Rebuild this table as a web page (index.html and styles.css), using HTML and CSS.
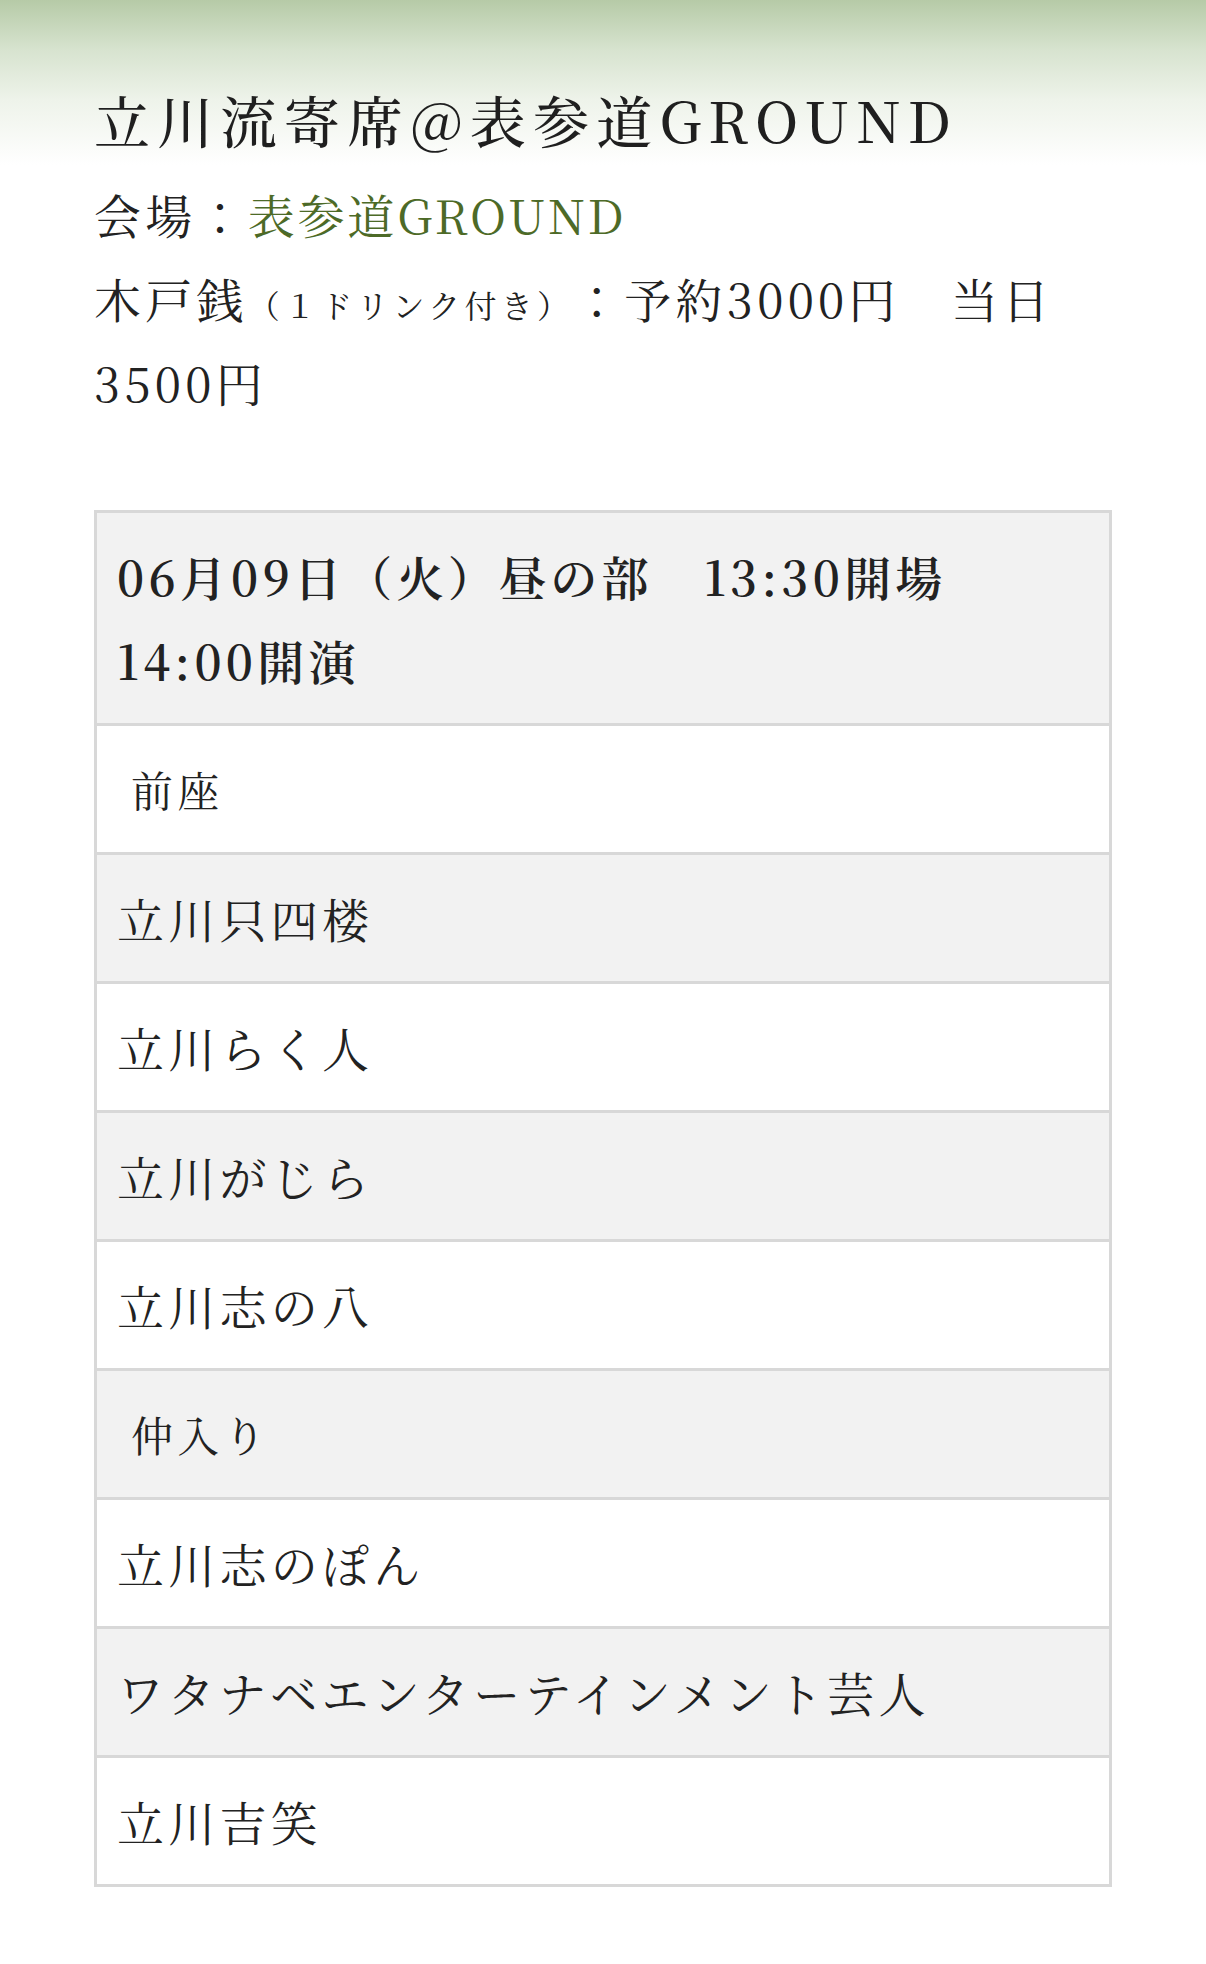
FILE: index.html
```html
<!DOCTYPE html>
<html lang="ja">
<head>
<meta charset="utf-8">
<title>立川流寄席@表参道GROUND</title>
<link rel="stylesheet" href="styles.css">
</head>
<body>
<main class="page">
  <h1 class="event-title">立川流寄席@表参道GROUND</h1>
  <p class="event-info">会場：<a class="venue-link" href="#">表参道GROUND</a><br>木戸銭<span class="small">（１ドリンク付き）</span>：予約3000円　当日<br>3500円</p>
  <table class="program">
    <tbody>
      <tr><th class="program-head">06月09日（火）昼の部　13:30開場<br>14:00開演</th></tr>
      <tr><td class="label">前座</td></tr>
      <tr><td>立川只四楼</td></tr>
      <tr><td>立川らく人</td></tr>
      <tr><td>立川がじら</td></tr>
      <tr><td>立川志の八</td></tr>
      <tr><td class="label">仲入り</td></tr>
      <tr><td>立川志のぽん</td></tr>
      <tr><td>ワタナベエンターテインメント芸人</td></tr>
      <tr><td>立川吉笑</td></tr>
    </tbody>
  </table>
</main>
</body>
</html>
```
FILE: styles.css
```css
html, body {
  margin: 0;
  padding: 0;
}

body {
  background: #fff linear-gradient(to bottom, #b6caa7 0px, #d7e3cf 50px, #eef3ea 100px, #ffffff 165px) no-repeat;
  background-size: 100% 170px;
  color: #222;
  font-family: "Noto Serif CJK JP", "Noto Serif JP", "Noto Sans CJK JP", serif;
  font-size: 47px;
  line-height: 84px;
  letter-spacing: 0.09em;
  text-spacing-trim: space-all;
}

.page {
  padding: 79px 94px 80px;
}

.event-title {
  margin: 0;
  font-size: 56px;
  line-height: 81px;
  font-weight: 500;
  letter-spacing: 0.13em;
  color: #1f1f1f;
}

.event-info {
  margin: 12px 0 86px;
}

.venue-link {
  color: #4d6a27;
  text-decoration: none;
  letter-spacing: 0.06em;
}

.small {
  font-size: 32px;
  line-height: 1;
}

.program {
  width: 100%;
  border-collapse: collapse;
  border: 3px solid #d8d8d8;
}

.program th,
.program td {
  border: 3px solid #d8d8d8;
  padding: 21px 20px;
  text-align: left;
  vertical-align: middle;
}

.program tr:nth-child(odd) {
  background: #f2f2f2;
}

.program tr:nth-child(even) {
  background: #fff;
}

.program-head {
  font-weight: 600;
}

.program td.label {
  font-size: 42px;
  padding-left: 34px;
}
```
